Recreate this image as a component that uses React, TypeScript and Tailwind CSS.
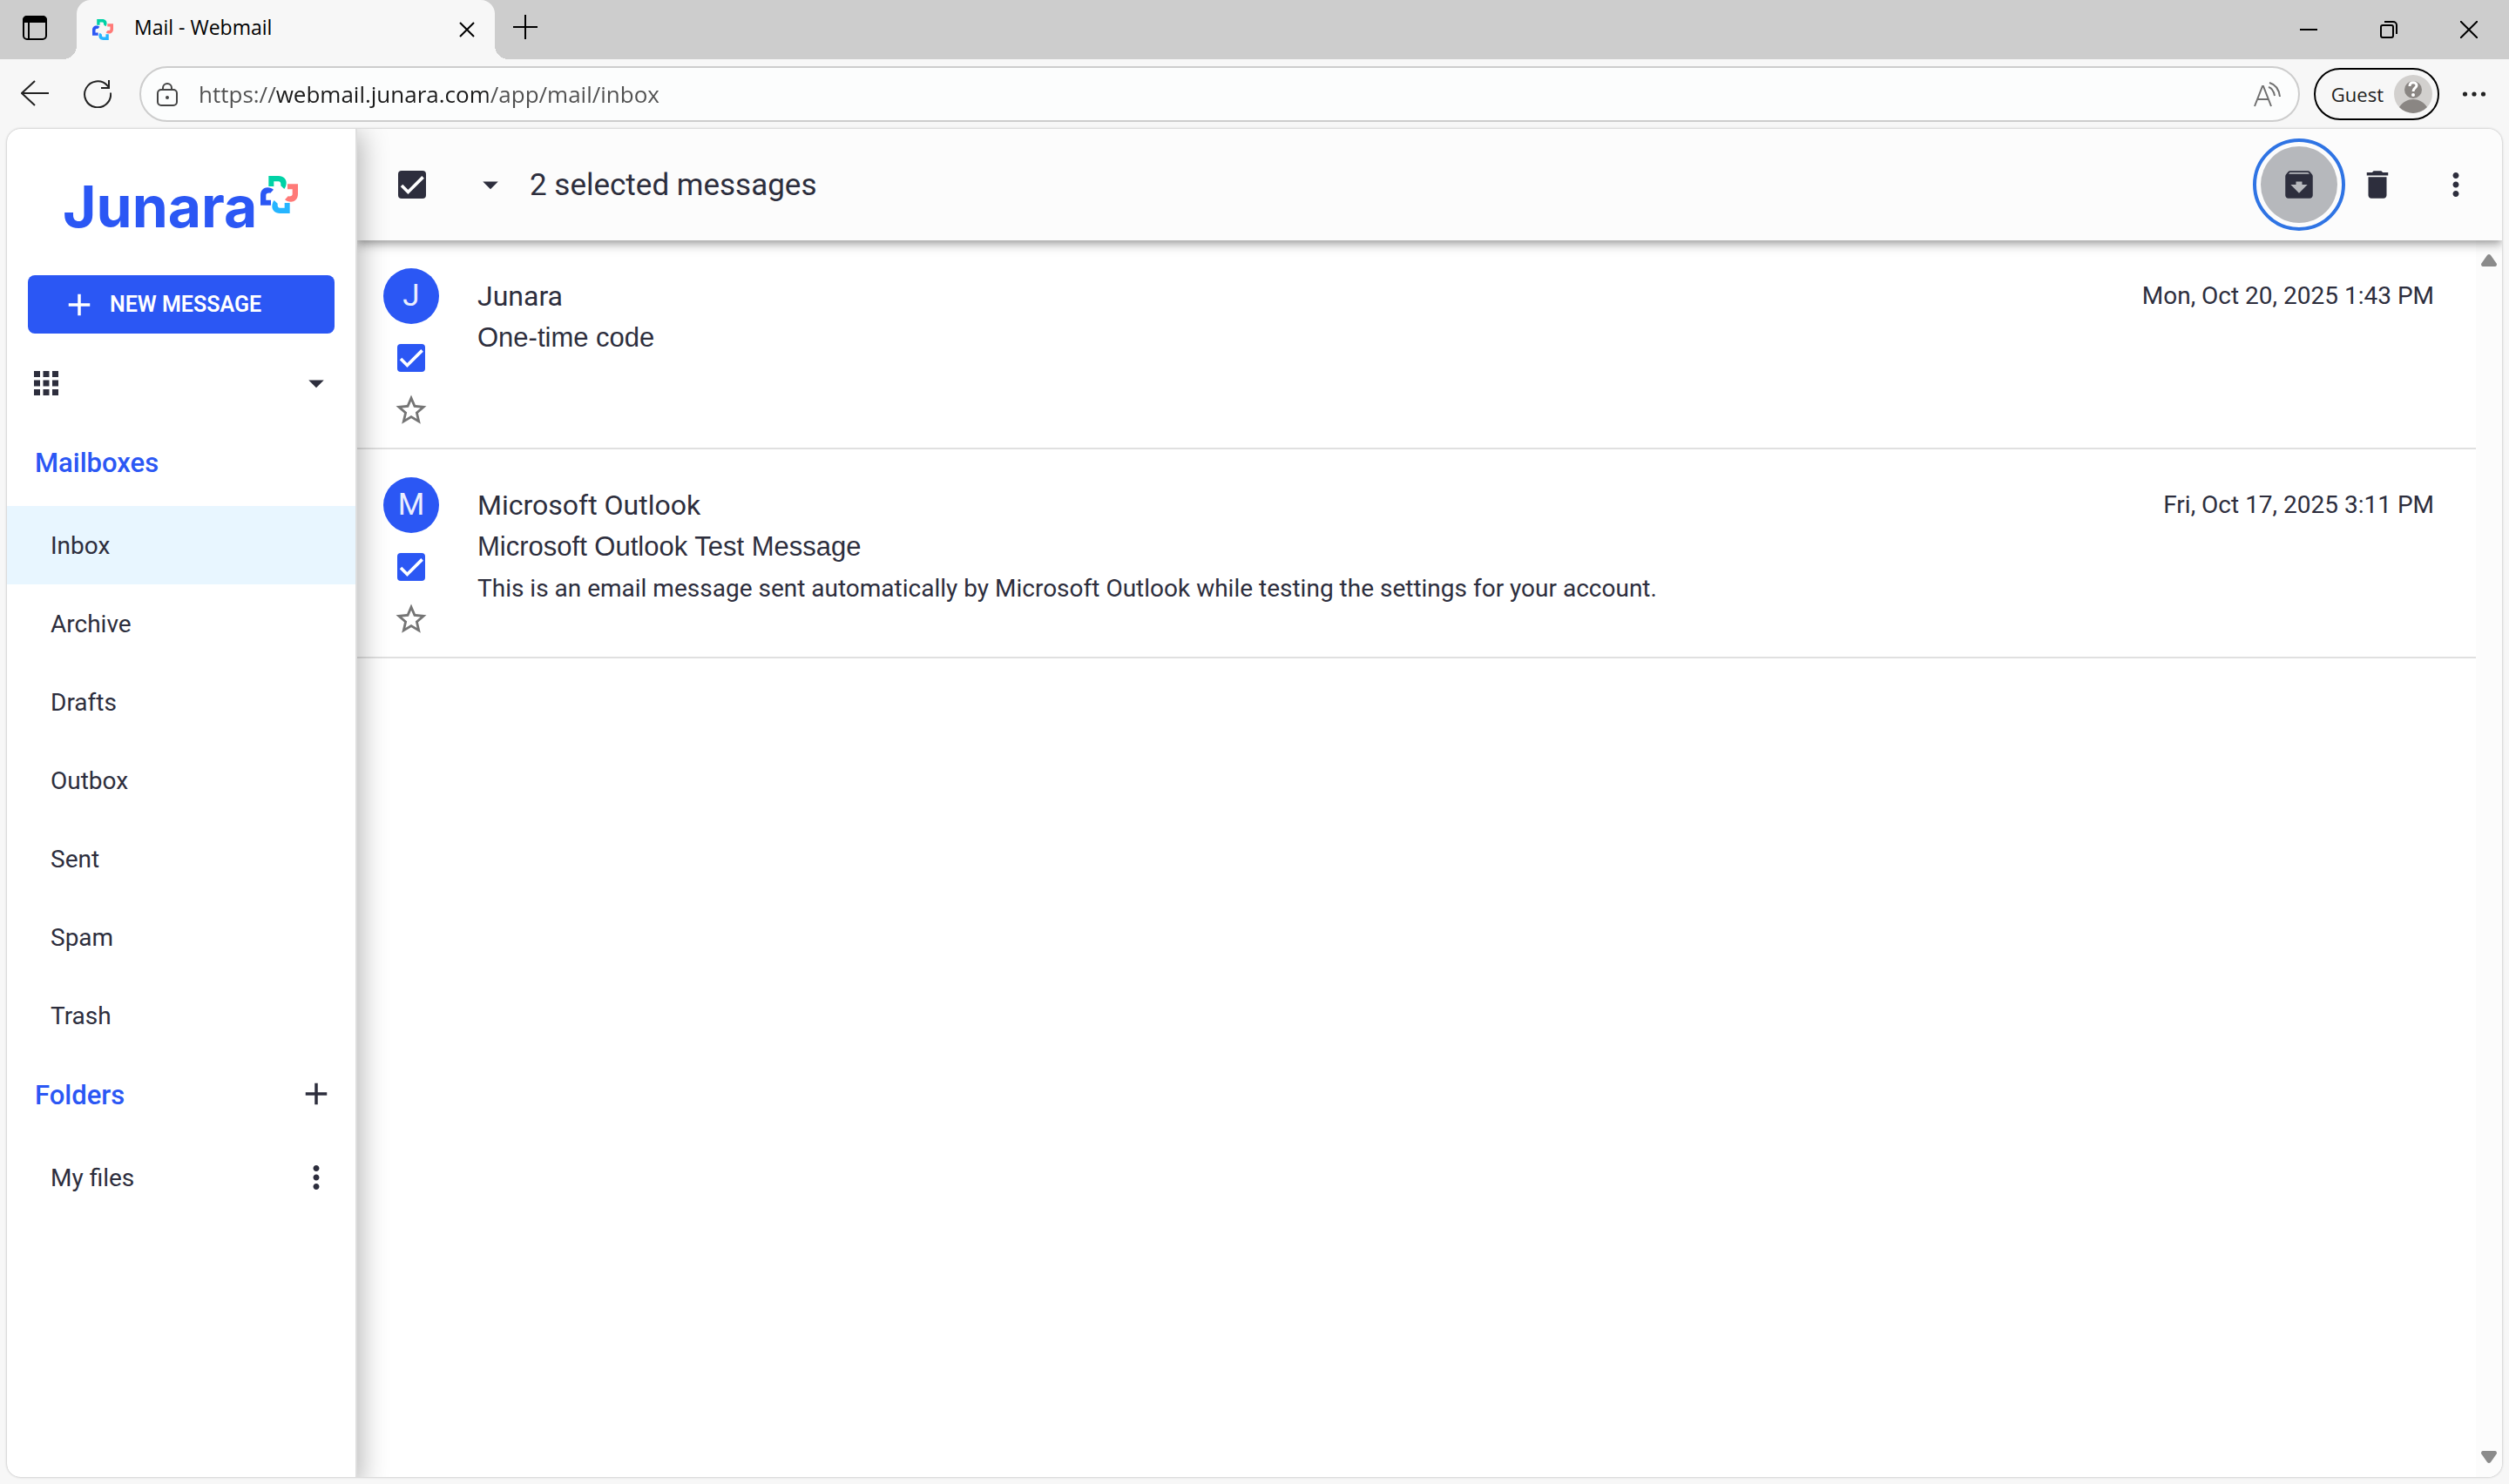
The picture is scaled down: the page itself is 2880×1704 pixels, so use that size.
import React, { useState } from 'react';
import {
  MdAdd,
  MdApps,
  MdArchive,
  MdArrowDropDown,
  MdDelete,
  MdMoreVert,
  MdStarBorder,
} from 'react-icons/md';

interface Message {
  id: number;
  sender: string;
  subject: string;
  snippet?: string;
  date: string;
}

const MAILBOXES = ['Inbox', 'Archive', 'Drafts', 'Outbox', 'Sent', 'Spam', 'Trash'];

const MESSAGES: Message[] = [
  {
    id: 1,
    sender: 'Junara',
    subject: 'One-time code',
    date: 'Mon, Oct 20, 2025 1:43 PM',
  },
  {
    id: 2,
    sender: 'Microsoft Outlook',
    subject: 'Microsoft Outlook Test Message',
    snippet:
      'This is an email message sent automatically by Microsoft Outlook while testing the settings for your account.',
    date: 'Fri, Oct 17, 2025 3:11 PM',
  },
];

// One arm of the logo, turned four times around the centre
const ARM = 'M28 0H62C80 0 89 12 89 24C89 33 86 40 82 45L70 34C71 24 68 19 62 19H46V36H28Z';

const LogoMark = ({ className }: { className: string }) => (
  <svg viewBox="0 0 129 129" className={className} aria-hidden="true">
    <path d={ARM} fill="#00d2a6" />
    <path d={ARM} fill="#ff7a78" transform="rotate(90 64.5 64.5)" />
    <path d={ARM} fill="#26b5ff" transform="rotate(180 64.5 64.5)" />
    <path d={ARM} fill="#2b57f4" transform="rotate(270 64.5 64.5)" />
  </svg>
);

interface CheckboxProps {
  label: string;
  checked: boolean;
  onChange: () => void;
  dark?: boolean;
}

const Checkbox: React.FC<CheckboxProps> = ({ label, checked, onChange, dark }) => (
  <label className="grid size-8 place-items-center">
    <input
      type="checkbox"
      aria-label={label}
      checked={checked}
      onChange={onChange}
      className={`peer col-start-1 row-start-1 size-8 appearance-none rounded border-4 border-[#757575] checked:border-0 ${
        dark ? 'checked:bg-[#2d2e3d]' : 'checked:bg-[#2b57f4]'
      }`}
    />
    <svg
      viewBox="0 0 24 24"
      className="pointer-events-none col-start-1 row-start-1 hidden size-7 peer-checked:block"
      fill="none"
      stroke="#fff"
      strokeWidth="3.12"
    >
      <path d="M1.73 12.91 8.1 19.28 22.79 4.59" />
    </svg>
  </label>
);

const TabStrip = () => (
  <div className="flex h-[68px] shrink-0 items-center justify-between bg-[#cdcdcd] text-black">
    <div className="flex h-full items-center">
      <button aria-label="Tab actions" className="flex w-[88px] justify-center pr-2 pb-1">
        <svg viewBox="0 0 28 28" className="size-7" fill="none" stroke="currentColor" strokeWidth="2">
          <rect x="1" y="1" width="26" height="26" rx="4" />
          <path d="M0 8V5a5 5 0 0 1 5-5h18a5 5 0 0 1 5 5v3z" fill="currentColor" stroke="none" />
          <path d="M7 8v19" />
        </svg>
      </button>
      <div className="relative flex h-full w-[480px] items-center rounded-t-2xl bg-[#f7f7f7] pr-[19px] pl-4">
        <span className="absolute bottom-0 -left-4 size-4 bg-[radial-gradient(circle_at_0_0,#cdcdcd_16px,#f7f7f7_16px)]" />
        <span className="absolute -right-4 bottom-0 size-4 bg-[radial-gradient(circle_at_100%_0,#cdcdcd_16px,#f7f7f7_16px)]" />
        <LogoMark className="ml-[2px] size-6" />
        <span className="ml-6 flex-1 pb-[6px] font-['Open_Sans','Noto_Sans',sans-serif] text-[23px]">
          Mail - Webmail
        </span>
        <button aria-label="Close tab" className="p-1">
          <svg viewBox="0 0 18 18" className="size-[18px]" stroke="currentColor" strokeWidth="2">
            <path d="M1 1l16 16M17 1L1 17" />
          </svg>
        </button>
      </div>
      <button aria-label="New tab" className="ml-[21px] pb-[6px]">
        <svg viewBox="0 0 28 28" className="size-7" stroke="currentColor" strokeWidth="2">
          <path d="M14 0v28M0 14h28" />
        </svg>
      </button>
    </div>
    <div className="flex items-center">
      <button aria-label="Minimize" className="flex w-[92px] justify-center">
        <svg viewBox="0 0 20 20" className="size-5" stroke="currentColor" strokeWidth="2">
          <path d="M0 10h20" />
        </svg>
      </button>
      <button aria-label="Restore" className="flex w-[92px] justify-center">
        <svg viewBox="0 0 20 20" className="size-5" fill="none" stroke="currentColor" strokeWidth="2">
          <rect x="1" y="5" width="14" height="14" rx="2" />
          <path d="M5 1h10a4 4 0 0 1 4 4v10" />
        </svg>
      </button>
      <button aria-label="Close window" className="flex w-[92px] justify-center">
        <svg viewBox="0 0 20 20" className="size-5" stroke="currentColor" strokeWidth="2">
          <path d="M0 0l20 20M20 0L0 20" />
        </svg>
      </button>
    </div>
  </div>
);

const AddressBar = () => {
  const [url, setUrl] = useState('https://webmail.junara.com/app/mail/inbox');

  return (
    <div className="flex h-20 shrink-0 items-center pr-[26px] pl-6 font-['Open_Sans','Noto_Sans',sans-serif] text-[#222]">
      <button aria-label="Back">
        <svg viewBox="0 0 32 32" className="size-8" fill="none" stroke="currentColor" strokeWidth="2">
          <path d="M32 15H1M16 1L1 15l15 14" />
        </svg>
      </button>
      <button aria-label="Refresh" className="ml-10">
        <svg viewBox="0 0 32 32" className="size-8" fill="none" stroke="currentColor" strokeWidth="2">
          <path d="M31 14.500A15 15 0 1 1 27 6l2.500 2.500M29 0v9h-9" />
        </svg>
      </button>
      <div className="ml-8 flex h-16 flex-1 items-center rounded-full border-2 border-[#cdcdcd] bg-[#fcfdfd] pr-5 pl-[18px]">
        <svg viewBox="0 0 24 27" className="h-[27px] w-6 text-[#444]" fill="none" stroke="currentColor" strokeWidth="2">
          <rect x="1" y="8" width="22" height="18" rx="4" />
          <path d="M7 8V6a5 5 0 0 1 10 0v2" />
          <circle cx="12" cy="17" r="2" fill="currentColor" stroke="none" />
        </svg>
        <input
          type="text"
          aria-label="Address"
          value={url}
          onChange={(e) => setUrl(e.target.value)}
          className="ml-6 h-full min-w-0 flex-1 bg-[linear-gradient(to_right,#505050_88px,#1a1a1a_88px,#1a1a1a_332px,#505050_332px)] bg-clip-text text-[26px] text-transparent caret-black outline-none"
        />
        <button aria-label="Read aloud">
          <svg viewBox="0 0 32 32" className="size-8 text-[#707070]" fill="none" stroke="currentColor" strokeWidth="2">
            <path d="M2 30L11 7h1l9 23M5 22h13" />
            <path d="M18 8c4 1 6 5 7 10M19 3c7 2 11 8 12 16" />
          </svg>
        </button>
      </div>
      <button className="ml-4 flex h-[60px] items-center rounded-full border-2 border-black pr-[6px] pl-[18px] text-[22px]">
        Guest
        <svg viewBox="0 0 44 44" className="ml-3 size-11" aria-hidden="true">
          <circle cx="22" cy="22" r="22" fill="#d2d0ce" />
          <path d="M6 37c4-6 10-9 16-9s12 3 16 9a22 22 0 0 1-32 0z" fill="#8a8683" />
          <circle cx="22" cy="17" r="10" fill="#8a8683" />
          <path d="M18 13c0-6 8-5 8-1 0 3-4 3-4 7" fill="none" stroke="#fff" strokeWidth="3" />
          <circle cx="22" cy="23" r="2" fill="#fff" />
        </svg>
      </button>
      <button aria-label="Settings and more" className="ml-[26px]">
        <svg viewBox="0 0 28 28" className="size-7" fill="currentColor">
          <circle cx="3.500" cy="14" r="2.600" />
          <circle cx="14" cy="14" r="2.600" />
          <circle cx="24.500" cy="14" r="2.600" />
        </svg>
      </button>
    </div>
  );
};

const Sidebar = () => (
  <aside className="relative z-10 w-[402px] shrink-0 border-r-2 border-[#dedede] bg-white shadow-[0_8px_30px_4px_rgba(0,0,0,0.3)]">
    <div className="flex h-[168px] items-start pt-[54px] pl-16">
      <span className="pt-[3px] font-['Inter',sans-serif] text-[66px] leading-[64px] font-bold text-[#2b57f4]">
        Junara
      </span>
      <LogoMark className="ml-1 size-[43px]" />
    </div>
    <div className="px-6">
      <button className="flex h-[67px] w-full items-center gap-[14px] rounded-lg bg-[#2b57f4] pl-[38px] text-[25px] font-semibold text-white">
        <MdAdd className="size-[42px]" />
        NEW MESSAGE
      </button>
    </div>
    <div className="mt-3 flex h-[90px] items-center justify-between px-6">
      <button aria-label="Apps">
        <MdApps className="size-[42px]" />
      </button>
      <button aria-label="Accounts">
        <MdArrowDropDown className="size-[42px]" />
      </button>
    </div>
    <nav>
      <h2 className="flex h-24 items-center pb-[2px] pl-8 text-[31px] font-medium text-[#2b57f4]">Mailboxes</h2>
      {MAILBOXES.map((name) => (
        <a
          key={name}
          href={`#${name.toLowerCase()}`}
          className={`flex h-[90px] items-center pt-[2px] pl-[50px] text-[28px] ${name === 'Inbox' ? 'bg-[#e8f6ff]' : ''}`}
        >
          {name}
        </a>
      ))}
      <div className="flex h-24 items-center justify-between pr-6 pb-[2px] pl-8">
        <h2 className="text-[31px] font-medium text-[#2b57f4]">Folders</h2>
        <button aria-label="Add folder" className="pb-1">
          <MdAdd className="size-[42px]" />
        </button>
      </div>
      <div className="flex h-[90px] items-center justify-between pr-6 pl-[50px]">
        <a href="#my-files" className="pt-[2px] text-[28px]">
          My files
        </a>
        <button aria-label="Folder options">
          <MdMoreVert className="size-[42px]" />
        </button>
      </div>
    </nav>
  </aside>
);

interface MessageRowProps {
  message: Message;
  checked: boolean;
  onToggle: () => void;
}

const MessageRow: React.FC<MessageRowProps> = ({ message, checked, onToggle }) => (
  <li className="flex gap-11 border-b-2 border-[#e0e0e0] pt-8 pr-12 pb-[22px] pl-[30px]">
    <div className="flex flex-col items-center gap-[18px]">
      <div className="flex size-16 items-center justify-center rounded-full bg-[#2b57f4] text-[35px] text-white/90">
        {message.sender[0]}
      </div>
      <div className="flex size-[42px] items-center justify-center">
        <Checkbox label={`Select ${message.subject}`} checked={checked} onChange={onToggle} />
      </div>
      <button aria-label="Star">
        <MdStarBorder className="size-[42px] text-[#757575]" />
      </button>
    </div>
    <div className="min-w-0 flex-1 pt-2">
      <div className="text-[32px] leading-[48px]">{message.sender}</div>
      <div className="font-['Liberation_Sans',Arial,sans-serif] text-[31px] leading-[48px]">{message.subject}</div>
      {message.snippet && <div className="truncate text-[28px] leading-[48px]">{message.snippet}</div>}
    </div>
    <time className="pt-2 text-[28px] leading-[48px]">{message.date}</time>
  </li>
);

const App = () => {
  const [selected, setSelected] = useState<number[]>([1, 2]);

  const toggle = (id: number) => {
    setSelected(selected.includes(id) ? selected.filter((s) => s !== id) : [...selected, id]);
  };

  const toggleAll = () => {
    setSelected(selected.length === MESSAGES.length ? [] : MESSAGES.map((m) => m.id));
  };

  return (
    <div className="flex min-h-screen flex-col bg-[#f7f7f7] font-['Roboto',sans-serif] text-[#2d2e3d]">
      <TabStrip />
      <AddressBar />

      <div className="mx-2 mb-2 flex flex-1 overflow-hidden rounded-2xl bg-white shadow-[0_0_3px_rgba(0,0,0,0.3)]">
        <Sidebar />

        <main className="flex min-w-0 flex-1 flex-col">
          <header className="relative flex h-32 shrink-0 items-center bg-[#fcfcfc] pr-[9px] pl-[47px] shadow-[0_4px_7px_-2px_rgba(0,0,0,0.2),0_7px_9px_0_rgba(0,0,0,0.14),0_2px_18px_0_rgba(0,0,0,0.12)]">
            <Checkbox
              label="Select all"
              checked={selected.length === MESSAGES.length}
              onChange={toggleAll}
              dark
            />
            <button aria-label="Selection options" className="ml-[53px]">
              <MdArrowDropDown className="size-[42px]" />
            </button>
            <h1 className="ml-6 flex-1 pt-[2px] text-[35px]">{selected.length} selected messages</h1>
            <div className="flex gap-[2px]">
              <button
                aria-label="Archive"
                className="flex size-[88px] items-center justify-center rounded-full bg-[#b6b8bc] outline-4 outline-offset-5 outline-[#2f74e4]"
              >
                <MdArchive className="size-[42px]" />
              </button>
              <button aria-label="Delete" className="flex size-[88px] items-center justify-center rounded-full">
                <MdDelete className="size-[42px]" />
              </button>
              <button aria-label="More" className="flex size-[88px] items-center justify-center rounded-full">
                <MdMoreVert className="size-[42px]" />
              </button>
            </div>
          </header>

          <div className="flex flex-1">
            <ul className="min-w-0 flex-1">
              {MESSAGES.map((m) => (
                <MessageRow
                  key={m.id}
                  message={m}
                  checked={selected.includes(m.id)}
                  onToggle={() => toggle(m.id)}
                />
              ))}
            </ul>
            {/* Scrollbar track */}
            <div className="flex w-[30px] flex-col items-center justify-between bg-[#fcfcfc] py-4 text-[#8b8b8b]">
              <svg viewBox="0 0 18 14" className="h-[14px] w-[18px]" fill="currentColor">
                <path d="M7 1q2-2 4 0l7 10q0 3-2 3H2q-2 0-2-3z" />
              </svg>
              <svg viewBox="0 0 18 14" className="h-[14px] w-[18px]" fill="currentColor">
                <path d="M7 13q2 2 4 0l7-10q0-3-2-3H2Q0 0 0 3z" />
              </svg>
            </div>
          </div>
        </main>
      </div>
    </div>
  );
};

export default App;
